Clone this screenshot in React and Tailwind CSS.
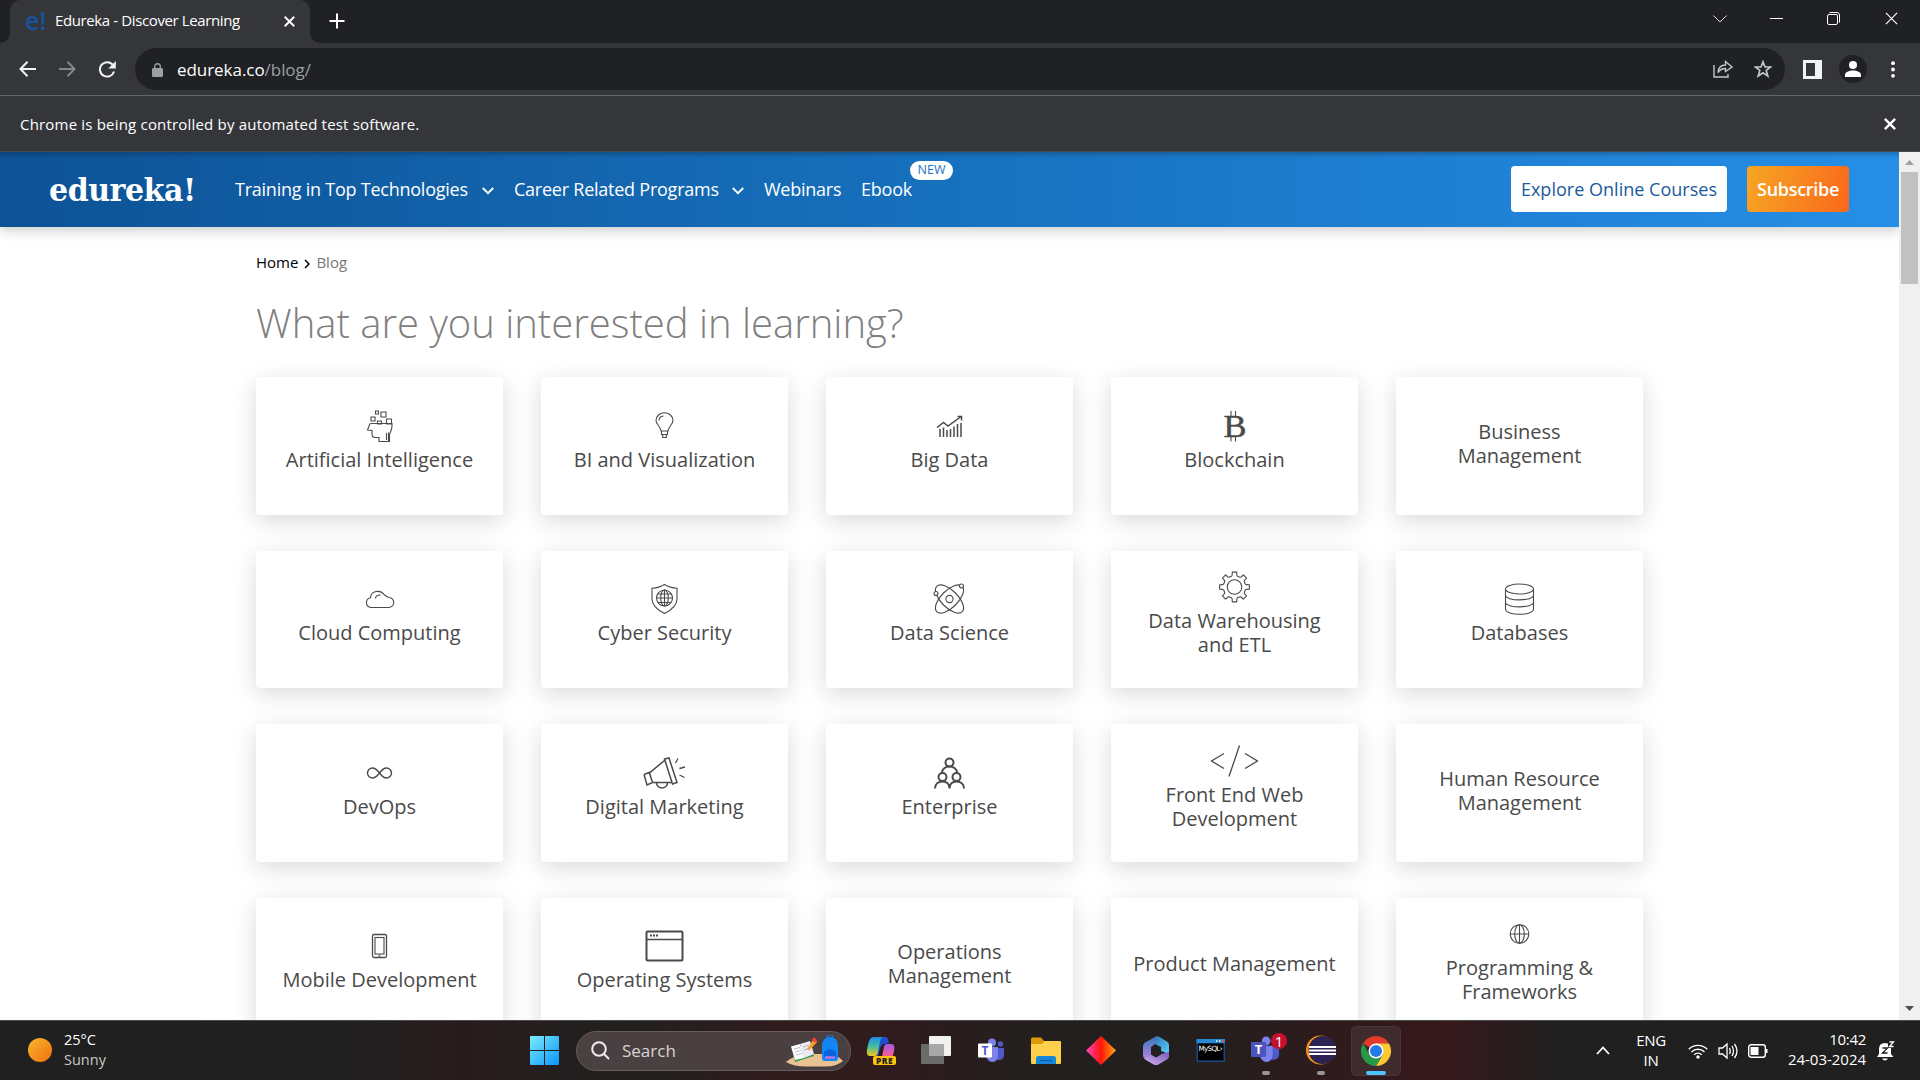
import React from "react";

const gearPath = (() => {
  const pts = [];
  for (let i = 0; i < 8; i++) {
    const c = (i * Math.PI) / 4;
    [[-0.27, 11.2], [-0.2, 12], [-0.15, 15], [0.15, 15], [0.2, 12], [0.27, 11.2]].forEach(([d, r]) => {
      pts.push(`${(r * Math.sin(c + d)).toFixed(2)} ${(-r * Math.cos(c + d)).toFixed(2)}`);
    });
  }
  return `M${pts.join("L")}Z`;
})();

const glyphs = {
  ai: (
    <>
      <path d="M-4-15h3v3h-3zM1.5-14h5v5h-5zM-8.500-9h4v4h-4zM7-7h5v5h-5zM-2-5h4v3h-4z" />
      <path d="M-9-2.500H12.500V0C12.500 4 10.500 6 10 9V15.500H-.5V11.500C-4 11.500-7.500 12-7.500 8.500V4.500L-12 4L-9.500-2.500M7 7V14M9 6.500V15" />
    </>
  ),
  bulb: <path d="M-3.500 5C-4-0-8.500-1.500-8.500-5.500A8.500 7.800 0 0 1 8.500-5.500C8.500-1.500 4-0 3.500 5ZM-3 5V8.500H3V5M-1.800 8.500V11.500H1.800V8.500M-5.500-5.500A5 4.500 0 0 1-1-10" />,
  chart: (
    <>
      <path d="M-12.500 1.500L-6-3.500L-1.500 0L11-9" strokeWidth="1.5" />
      <path d="M8-9.500H12V-5.500" strokeWidth="1.5" />
      <path d="M-9.500 11V3M-6 11V1.500M-2.500 11V4M1 11V3M4.500 11V.5M8 11V-2M11.500 11V-3" strokeWidth="1.500" />
    </>
  ),
  bitcoin: (
    <>
      <text x="-11" y="11" fontSize="31" textLength="23" lengthAdjust="spacingAndGlyphs" fill="#4a4a4a" stroke="#4a4a4a" strokeWidth=".5" fontFamily="Liberation Serif, serif">B</text>
      <path d="M-3.500-15V-9M1-15V-9M-3.500 10V15.500M1 10V15.500" />
    </>
  ),
  cloud: <path d="M-9 8.500A5 5 0 0 1-9-1.300C-8.600-8.500 1-9.500 4.500-4.500C6.500-3 8-2 9.500-1.500A5 5 0 0 1 9 8.500ZM-4-.5C-4-2.500-2-4 1-4" />,
  shield: (
    <>
      <path d="M0-14.500C4-12 8-11 12.500-10.800V0C12.500 6 7 11 0 14.500C-7 11-12.500 6-12.500 0V-10.800C-8-11-4-12 0-14.500Z" />
      <circle cx="0" cy="-1" r="8" />
      <ellipse cx="0" cy="-1" rx="3.800" ry="8" />
      <path d="M-8-1H8M0-9V7M-7-5H7M-7 3.500H7" />
    </>
  ),
  atom: (
    <>
      <ellipse cx="0" cy="0" rx="18" ry="8.500" transform="rotate(45)" />
      <ellipse cx="0" cy="0" rx="18" ry="8.500" transform="rotate(-45)" />
      <circle cx="0" cy="0" r="3.600" />
      <circle cx="-13.500" cy="-5.500" r="2" fill="#fff" />
      <circle cx="12" cy="-13" r="2" fill="#fff" />
    </>
  ),
  gear: (
    <>
      <path d={gearPath} strokeLinejoin="round" />
      <circle cx="0" cy="0" r="7.300" />
    </>
  ),
  database: (
    <>
      <ellipse cx="0" cy="-10" rx="14" ry="5" />
      <path d="M-14-10V10C-14 17 14 17 14 10V-10M-14-4C-14 2.500 14 2.500 14-4M-14 3C-14 9.500 14 9.500 14 3" />
    </>
  ),
  infinity: <path strokeWidth="1.400" d="M0 0C-3-4-4.500-5-7-5A5 5 0 0 0-7 5C-4.500 5-3 4 0 0C3-4 4.500-5 7-5A5 5 0 0 1 7 5C4.500 5 3 4 0 0Z" />,
  megaphone: (
    <>
      <path strokeWidth="1.500" d="M-20.500 1.500L-14-1L0-12.500M-20.500 1.500L-17.500 12L-12 9.500L-15 0M-12 9.500H8M0-14L4.500-15L12.500 9.500L8 11ZM-8 10A5.500 5 0 0 0 3 10" />
      <path strokeWidth="1.300" d="M11-10L13.500-14.500M15-4.500L20.500-6M15 2L20 4.500" />
    </>
  ),
  enterprise: (
    <g strokeWidth="2">
      <circle cx="0" cy="-10.500" r="4" />
      <path d="M-7.500-.5C-7.500-4-4-6.500 0-6.500S7.500-4 7.500-.5" />
      <circle cx="-7" cy="4" r="4" />
      <circle cx="7" cy="4" r="4" />
      <path d="M-14.500 15.500C-14.500 11-11 8.500-7 8.500S0 11 0 15.500C0 11 3 8.500 7 8.500S14.500 11 14.500 15.500" />
    </g>
  ),
  code: <path strokeWidth="1.300" d="M-10.500-7.500L-23 0L-10.500 7.500M10.500-7.500L23 0L10.500 7.500M5-15.500L-5.500 15.500" />,
  mobile: (
    <>
      <rect x="-7" y="-11.500" width="14" height="23" rx="1.500" strokeWidth="1.300" />
      <rect x="-4.500" y="-8.500" width="9" height="16.500" />
      <path d="M-1 9.800H1" strokeWidth="1.200" />
    </>
  ),
  window: (
    <>
      <rect x="-18" y="-14.500" width="36" height="29" rx="1" strokeWidth="2" />
      <path d="M-18-6.500H18" strokeWidth="1.600" />
      <path d="M-14.500-10.500h2M-11.500-10.500h2M-8.500-10.500h2" strokeWidth="2" />
    </>
  ),
  globe: (
    <>
      <circle cx="0" cy="0" r="9.300" />
      <ellipse cx="0" cy="0" rx="4.800" ry="9.300" />
      <path d="M-9.300 0H9.300M0-9.300V9.300" />
    </>
  ),
};

const cards = [
  ["ai", "Artificial Intelligence"],
  ["bulb", "BI and Visualization"],
  ["chart", "Big Data"],
  ["bitcoin", "Blockchain"],
  [null, "Business", "Management"],
  ["cloud", "Cloud Computing"],
  ["shield", "Cyber Security"],
  ["atom", "Data Science"],
  ["gear", "Data Warehousing", "and ETL"],
  ["database", "Databases"],
  ["infinity", "DevOps"],
  ["megaphone", "Digital Marketing"],
  ["enterprise", "Enterprise"],
  ["code", "Front End Web", "Development"],
  [null, "Human Resource", "Management"],
  ["mobile", "Mobile Development"],
  ["window", "Operating Systems"],
  [null, "Operations", "Management"],
  [null, "Product Management"],
  ["globe", "Programming &", "Frameworks"],
];

function Card({ icon, lines }) {
  return (
    <div className={`flex flex-col items-center justify-center rounded-[4px] bg-white shadow-[0_6px_24px_rgba(0,0,0,0.15)] ${icon ? "pb-[3px]" : "pb-[4px]"}`}>
      {icon && (
        <div className="h-[31px]">
          <svg viewBox="-24 -18 48 36" fill="none" stroke="#4a4a4a" strokeWidth="1.1" className="-mt-[9px] h-[36px] w-[48px] -translate-x-[0.5px]">
            {glyphs[icon]}
          </svg>
        </div>
      )}
      {lines.map((l) => (
        <div key={l} className="h-[24px] whitespace-nowrap text-[20px] leading-[24px] text-[#4a4a4a]">{l}</div>
      ))}
    </div>
  );
}

function CloseIcon({ className, strokeWidth = 2 }) {
  return (
    <svg viewBox="0 0 10 10" className={className} stroke="currentColor" strokeWidth={strokeWidth} fill="none">
      <path d="M.7.7l8.600 8.600M9.300.7L.7 9.300" />
    </svg>
  );
}

function BrowserChrome() {
  return (
    <div className="h-[152px] bg-[#35363a] text-white">
      <div className="flex h-[43px] bg-[#202124]">
        <div className="flex w-[10px] items-end bg-[#35363a]">
          <div className="h-[43px] w-[10px] rounded-br-[10px] bg-[#202124]" />
        </div>
        <div className="flex w-[300px] items-center rounded-t-[10px] bg-[#35363a] pl-[15px]">
          <span className="w-[20px] pb-[4px] text-[25px] font-semibold leading-[30px] text-[#15539e]">e!</span>
          <span className="ml-[10px] w-[205px] whitespace-nowrap pb-[3px] text-[15px] leading-[20px] tracking-[-0.38px]">Edureka - Discover Learning</span>
          <CloseIcon className="ml-[24px] size-[11px]" strokeWidth={1.700} />
        </div>
        <div className="bg-[#35363a]">
          <div className="h-[43px] w-[10px] rounded-bl-[10px] bg-[#202124]" />
        </div>
        <svg viewBox="0 0 16 16" className="ml-[9px] mt-[13px] size-[16px]" stroke="#fff" strokeWidth="2"><path d="M8 .5v15M.5 8h15" /></svg>
        <div className="ml-auto flex items-center pb-[6px] pr-[22px]">
          <svg viewBox="0 0 14 8" className="h-[8px] w-[14px]" stroke="#ddd" fill="none"><path d="M.5.5L7 7L13.500.5" /></svg>
          <div className="ml-[43px] h-px w-[13px] bg-white" />
          <svg viewBox="0 0 13 13" className="ml-[44px] size-[13px]" stroke="#fff" fill="none"><rect x=".5" y="2.500" width="10" height="10" rx="1.500" /><path d="M2.500.5H10A2.500 2.500 0 0 1 12.500 3V10.500" /></svg>
          <CloseIcon className="ml-[45px] size-[13px]" strokeWidth={0.9} />
        </div>
      </div>
      <div className="flex h-[52px] items-center pl-[19px]">
        <svg viewBox="0 0 17 16" className="h-[16px] w-[17px]" stroke="#f1f3f4" strokeWidth="2" fill="none"><path d="M8.500.8L1.500 8l7 7.200M1.500 8H17" /></svg>
        <svg viewBox="0 0 17 16" className="ml-[23px] h-[16px] w-[17px]" stroke="#85868a" strokeWidth="2" fill="none"><path d="M8.500.8l7 7.200l-7 7.200M15.500 8H0" /></svg>
        <svg viewBox="0 0 18 17" className="ml-[22px] h-[17px] w-[18px]" fill="none" stroke="#f1f3f4" strokeWidth="2"><path d="M15 4.200A7.200 7.200 0 1 0 16 10.500" /><path d="M17.800 0V7.500H10.300Z" fill="#f1f3f4" stroke="none" /></svg>
        <div className="ml-[19px] flex h-[42px] w-[1650px] items-center rounded-full bg-[#202124] pl-[17px] pr-[13px]">
          <svg viewBox="0 0 11 14" className="mt-px h-[14px] w-[11px]" fill="#9aa0a6"><rect y="5" width="11" height="9" rx="1.200" /><path d="M2.700 5.500V3.500a2.800 2.800 0 0 1 5.600 0V5.500" fill="none" stroke="#9aa0a6" strokeWidth="1.400" /></svg>
          <span className="ml-[14px] pt-[2px] text-[17px] leading-[22px] tracking-[-0.05px]">edureka.co<span className="text-[#9aa0a6]">/blog/</span></span>
          <svg viewBox="0 0 20 18" className="ml-auto h-[18px] w-[20px]" fill="none" stroke="#c4c7c9" strokeWidth="1.400"><path d="M1 5V17H15V14M5 12.500C5.500 7 8.500 5 12.500 5V1.500L19 7L12.500 11.500V8.500C9.500 8.500 7 9.500 5 12.500Z" /></svg>
          <svg viewBox="0 0 18 18" className="ml-[21px] size-[18px]" fill="none" stroke="#c4c7c9" strokeWidth="1.700"><path d="M9 1.800L11 7H16.700L12.200 10.400L13.800 16L9 12.700L4.200 16L5.800 10.400L1.300 7H7Z" /></svg>
        </div>
        <svg viewBox="0 0 19 19" className="ml-[18px] size-[19px]"><path d="M0 0H19V19H0ZM3 3V16H12V3Z" fill="#f1f3f4" fillRule="evenodd" /></svg>
        <svg viewBox="0 0 28 28" className="ml-[17px] size-[28px]"><circle cx="14" cy="14" r="14" fill="#202124" /><circle cx="14" cy="10" r="4" fill="#fff" /><path d="M6 22V20C6 17 10 15.500 14 15.500S22 17 22 20V22Z" fill="#fff" /></svg>
        <svg viewBox="0 0 4 17" className="ml-[24px] h-[17px] w-[4px]" fill="#fff"><circle cx="2" cy="2.200" r="1.900" /><circle cx="2" cy="8.500" r="1.900" /><circle cx="2" cy="14.800" r="1.900" /></svg>
      </div>
      <div className="flex h-[57px] items-center border-y border-t-[#64656a] border-b-[#4a4b4e] pl-[20px] pr-[24px] text-[15px]">
        <span className="pt-px tracking-[0.19px]">Chrome is being controlled by automated test software.</span>
        <CloseIcon className="ml-auto size-[12px]" strokeWidth={2} />
      </div>
    </div>
  );
}

function NavChevron({ className }) {
  return <svg viewBox="0 0 12 8" className={className} stroke="#fff" strokeWidth="1.900" fill="none"><path d="M.8 1L6 6.200L11.200 1" /></svg>;
}

function SiteHeader() {
  return (
    <div className="relative z-10 flex h-[75px] items-center bg-[linear-gradient(90deg,#0d5295_0%,#1771be_50%,#268ee6_100%)] pl-[49px] text-[18px] font-medium text-white shadow-[0_3px_12px_rgba(0,0,0,0.22)]">
      <div className="pointer-events-none absolute inset-x-0 top-0 h-[6px] bg-gradient-to-b from-black/20 to-transparent" />
      <div className="w-[186px]">
        <span className="inline-block origin-left scale-x-[0.97] font-['DejaVu_Serif'] text-[31px] font-bold leading-[40px] tracking-[-0.5px]">edureka!</span>
      </div>
      <span className="w-[233px] whitespace-nowrap tracking-[-0.24px]">Training in Top Technologies</span>
      <NavChevron className="ml-[14px] mt-[2px] h-[8px] w-[12px]" />
      <span className="ml-[20px] w-[204px] whitespace-nowrap tracking-[-0.24px]">Career Related Programs</span>
      <NavChevron className="ml-[14px] mt-[2px] h-[8px] w-[12px]" />
      <span className="ml-[20px] w-[77px] whitespace-nowrap tracking-[-0.25px]">Webinars</span>
      <span className="relative ml-[20px] whitespace-nowrap tracking-[-0.2px]">
        Ebook
        <span className="absolute -top-[15px] left-[49px] flex h-[19px] w-[43px] items-center justify-center rounded-full bg-white pb-px text-[12.5px] tracking-normal text-[#1c74c4]">NEW</span>
      </span>
      <div className="-mt-[2px] ml-auto flex gap-[20px] pr-[50px]">
        <div className="flex h-[46px] w-[216px] items-center justify-center whitespace-nowrap rounded-[4px] bg-white pt-px tracking-[0.02px] text-[#1a5a9e]">Explore Online Courses</div>
        <div className="flex h-[46px] w-[102px] items-center justify-center rounded-[4px] bg-[linear-gradient(105deg,#f7a623,#f9681c)] pt-px font-semibold tracking-[-0.3px]">Subscribe</div>
      </div>
    </div>
  );
}

function Teams({ white }) {
  return (
    <>
      <circle cx="14" cy="4.500" r="4" fill="#7b83eb" />
      <circle cx="22.500" cy="6" r="2.700" fill="#5059c9" />
      <path d="M18 10H26V17C26 20 24 22 21 22H18Z" fill="#5059c9" />
      <path d="M8 9H20V17C20 21 18 24 14.500 24S9 21 8 18Z" fill="#7b83eb" />
      <rect x="0" y="5.500" width="14" height="14" rx="1" fill={white ? "#fff" : "#4b53bc"} />
      <text x="7" y="16.500" textAnchor="middle" fontSize="12" fontWeight="700" fill={white ? "#5059c9" : "#fff"}>T</text>
    </>
  );
}

const apps = [
  {
    name: "copilot",
    art: (
      <>
        <defs>
          <linearGradient id="cpA" x1="0" y1="0" x2="0" y2="1"><stop offset="0" stopColor="#1c8be8" /><stop offset=".5" stopColor="#45bfa0" /><stop offset="1" stopColor="#f4c51c" /></linearGradient>
          <linearGradient id="cpB" x1="0" y1="0" x2="0" y2="1"><stop offset="0" stopColor="#a95bea" /><stop offset=".6" stopColor="#ee5c9a" /><stop offset="1" stopColor="#f87c50" /></linearGradient>
        </defs>
        <path d="M12 1H19C21.500 1 22 3 23 7L18 8C16 8 15 10 14 13L12 20H8Z" fill="#1f4fd0" />
        <path d="M17 1H8C4 1 3 5 2 9C1 13-1 20 4 20H9C12 20 12 15 13 11C14 7 14 2 17 1Z" fill="url(#cpA)" />
        <path d="M21 8H25C30 8 28.500 14 27 19C26 24 24 26 20 26H12C16 25 16 20 17 16C18 11 18 8 21 8Z" fill="url(#cpB)" />
        <rect x="7" y="20" width="23" height="9" rx="2" fill="#fdc30b" />
        <text x="18.500" y="27.500" textAnchor="middle" fontSize="8.500" fontWeight="800" letterSpacing=".4" fill="#222">PRE</text>
      </>
    ),
  },
  {
    name: "taskview",
    art: (
      <>
        <rect x="8" y="0" width="22" height="20" rx="1" fill="#f1f1f1" />
        <rect x="0" y="8" width="23" height="20" rx="1" fill="#6b6b6b" />
        <path d="M8 8H23V20H8Z" fill="#a8a6a6" />
      </>
    ),
  },
  { name: "teams", art: <g transform="translate(2 2)"><Teams white /></g> },
  {
    name: "explorer",
    art: (
      <>
        <path d="M0 3Q0 1.500 1.500 1.500H10L13 5H28V12H0Z" fill="#dd9a07" />
        <path d="M0 8H11L13.500 5H29Q30 5 30 6V27Q30 28 29 28H1Q0 28 0 27Z" fill="#fcd04a" />
        <path d="M5 28V22.500Q5 20 7.500 20H22.500Q25 20 25 22.500V28Z" fill="#1587d8" />
        <path d="M9 24.500H21" stroke="#0a5ba4" strokeWidth="1.200" />
      </>
    ),
  },
  {
    name: "diamond",
    art: (
      <>
        <defs><linearGradient id="dm"><stop offset="0" stopColor="#ff45c8" /><stop offset=".5" stopColor="#ff1508" /><stop offset="1" stopColor="#ffab10" /></linearGradient></defs>
        <path d="M15 0L30 14.500L15 29L0 14.500Z" fill="url(#dm)" />
      </>
    ),
  },
  {
    name: "m365",
    art: (
      <>
        <defs>
          <linearGradient id="mA" x1="0" y1="0" x2="0" y2="1"><stop offset="0" stopColor="#3a78b8" /><stop offset="1" stopColor="#a884e0" /></linearGradient>
          <linearGradient id="mB" x1="0" y1="0" x2="1" y2="1"><stop offset="0" stopColor="#2f6fb4" /><stop offset="1" stopColor="#5cd0fa" /></linearGradient>
          <linearGradient id="mC" x1="0" y1="1" x2="1" y2="0"><stop offset="0" stopColor="#d6b4f2" /><stop offset="1" stopColor="#7a58b8" /></linearGradient>
        </defs>
        <path d="M15 .5Q17 0 18.500 1L26 5.500Q28 6.800 28 9V18L20 15V11L13 7.500L11 4Z" fill="url(#mB)" />
        <path d="M15 .5L4 6.500Q2 8 2 10V20Q2 22 4 22L10 19V11L14 8Z" fill="url(#mA)" />
        <path d="M28 16V20.500Q28 22 26 23.500L17 28.700Q15 29.500 13 28.700L4 23.500L3 22L10 18.500L15 21L20 18Z" fill="url(#mC)" />
        <path d="M10 11L20 11L20 18.500L15 21.500L10 18.500Z" fill="#242021" />
      </>
    ),
  },
  {
    name: "mysql",
    art: (
      <>
        <rect x=".5" y="3" width="28.500" height="23" rx="1" fill="#174a84" />
        <rect x=".5" y="3" width="28.500" height="4" fill="#2589d4" />
        <path d="M20 5h1.500M23 5h1.500" stroke="#fff" strokeWidth="1.500" />
        <path d="M26 5h2" stroke="#f05030" strokeWidth="2" />
        <rect x="2" y="7.500" width="25.500" height="17" fill="#000" />
        <text x="2.500" y="14.800" fontSize="7.200" fill="#fff" textLength="24" fontFamily="DejaVu Sans">MySQL›</text>
      </>
    ),
  },
  {
    name: "teams-work",
    running: true,
    art: (
      <>
        <g transform="scale(1.08)"><Teams /></g>
        <circle cx="28" cy="5" r="8" fill="#c8102e" />
        <text x="28" y="10.500" textAnchor="middle" fontSize="15" fill="#fff">1</text>
      </>
    ),
  },
  {
    name: "eclipse",
    running: true,
    art: (
      <>
        <circle cx="14.500" cy="14" r="14.500" fill="#f7941e" />
        <circle cx="16.500" cy="14" r="14" fill="#33292c" />
        <circle cx="16.500" cy="14" r="13.500" fill="#2c2255" />
        <path d="M3 11H30M3 14.500H30M3 18H30" stroke="#fff" strokeWidth="2" />
      </>
    ),
  },
  {
    name: "chrome",
    active: true,
    art: (
      <>
        <path d="M15 15L2 7.500A15 15 0 0 1 28 7.500L21.500 7.500Z" fill="#e33b2e" />
        <path d="M15 7.500H28A15 15 0 0 1 15 30L21.500 18.700Z" fill="#fcc934" />
        <path d="M8.500 18.700L2 7.500A15 15 0 0 0 15 30L21.500 18.700Z" fill="#269a48" />
        <circle cx="15" cy="15" r="7.500" fill="#fff" />
        <circle cx="15" cy="15" r="6" fill="#2578e8" />
      </>
    ),
  },
];

function Taskbar() {
  return (
    <div className="flex h-[60px] items-center border-t border-[#4b4b4b] bg-[linear-gradient(90deg,#202020_0%,#222020_19%,#291b1d_24%,#231f1f_30%,#24201f_34%,#301b1d_40%,#301b1d_46%,#251f1f_53%,#221f1f_60%,#281d1d_65%,#33191c_72%,#35191d_76%,#202020_81%,#202020_100%)] text-[14px] text-white">
      <div className="mb-[2px] ml-[28px] size-[24px] rounded-full bg-[linear-gradient(135deg,#f8b62c,#f0700f)]" />
      <div className="-mt-[2px] ml-[12px] w-[466px] text-[14.5px] leading-[20px]">
        <div>25°C</div>
        <div className="text-[#c8c8c8]">Sunny</div>
      </div>
      <svg viewBox="0 0 29 29" className="size-[29px]">
        <defs><linearGradient id="win" x1="0" y1="0" x2="1" y2="1"><stop offset="0" stopColor="#7cecff" /><stop offset="1" stopColor="#0a95f8" /></linearGradient></defs>
        <path d="M0 1Q0 0 1 0H14V14H0ZM15 0H28Q29 0 29 1V14H15ZM0 15H14V29H1Q0 29 0 28ZM15 15H29V28Q29 29 28 29H15Z" fill="url(#win)" />
      </svg>
      <div className="ml-[17px] flex h-[40px] w-[275px] items-center rounded-full border border-[#655c5c] bg-[#4a4041] pl-[14px] pr-[7px]">
        <svg viewBox="0 0 19 19" className="size-[19px]" fill="none" stroke="#eee" strokeWidth="2"><circle cx="8" cy="8" r="6.800" /><path d="M13 13l5 5" /></svg>
        <span className="ml-[12px] text-[17px] text-[#d8d4d4]">Search</span>
        <svg viewBox="0 0 57 32" className="ml-auto h-[32px] w-[57px]">
          <path d="M0 27Q10 19 20 19H45Q50 19 57 26Q50 32 38 31.500H20Q8 31.500 0 27Z" fill="#e9c294" />
          <path d="M6 13L25 8L28 21L9 27Z" fill="#3c9c50" />
          <path d="M5 11.500L14 9L18 23L9 25Z" fill="#fff" />
          <path d="M14 9L24 6L28 19L18 23Z" fill="#eceaf6" />
          <path d="M8 14l6-1.500M9 17l6-1.500M10 20l6-1.500M17 12l6-2M18 15l6-2" stroke="#a9a5c0" strokeWidth=".8" />
          <path d="M22 14L28 5L30 7L23 14.500Z" fill="#f9a02c" stroke="#f9a02c" strokeWidth="1.500" />
          <path d="M27 3.500l3 3" stroke="#ee4433" strokeWidth="3.500" />
          <rect x="41" y="0" width="6" height="6" rx="3" fill="none" stroke="#1b6fd0" strokeWidth="1.500" />
          <path d="M36 12Q36 2 44 2T52 12V23Q52 26 49 26H39Q36 26 36 23Z" fill="#1287f3" />
          <path d="M38 17Q44 11 50 17V22Q50 24 48 24H40Q38 24 38 22Z" fill="#0c62dc" />
          <path d="M39 22.500H49" stroke="#b679f0" strokeWidth="2.500" />
        </svg>
      </div>
      <div className="ml-[2px] flex">
        {apps.map((a) => (
          <div key={a.name} className="flex w-[55px] justify-center">
            <div className={a.active ? "relative flex h-[50px] w-[50px] justify-center rounded-[5px] border border-[#4a3638] bg-[#3f2b2e] pt-[9px]" : "relative flex h-[50px] w-[50px] justify-center pt-[10px]"}>
              <svg viewBox="0 0 30 30" className="size-[30px] overflow-visible font-['Open_Sans']">{a.art}</svg>
              {a.running && <div className="absolute bottom-[1px] left-[21px] h-[4px] w-[8px] rounded-full bg-[#9c9595]" />}
              {a.active && <div className="absolute bottom-0 left-[14px] h-[4px] w-[20px] rounded-full bg-[#4cc2ff]" />}
            </div>
          </div>
        ))}
      </div>
      <svg viewBox="0 0 14 9" className="ml-auto h-[9px] w-[14px]" fill="none" stroke="#fff" strokeWidth="1.800"><path d="M1 8L7 1.500L13 8" /></svg>
      <div className="-mt-[2px] ml-[25px] w-[32px] text-center text-[15px] leading-[20px] tracking-[-0.3px]"><div>ENG</div><div>IN</div></div>
      <svg viewBox="0 0 20 16" className="ml-[21px] h-[16px] w-[20px]" fill="none" stroke="#fff" strokeWidth="1.400"><path d="M.8 6.200A13 13 0 0 1 19.200 6.200M3.500 9A9.200 9.200 0 0 1 16.500 9M6.200 11.700A5.400 5.400 0 0 1 13.800 11.700" /><circle cx="10" cy="14" r="1.700" fill="#fff" stroke="none" /></svg>
      <svg viewBox="0 0 21 18" className="ml-[10px] h-[18px] w-[21px]" fill="none" stroke="#fff" strokeWidth="1.300"><path d="M1 6H4.500L9 2V16L4.500 12H1ZM11.500 6Q13 9 11.500 12M14 4Q17 9 14 14M16.500 2Q21.500 9 16.500 16" /></svg>
      <svg viewBox="0 0 20 14" className="ml-[9px] h-[14px] w-[20px]"><rect x=".7" y=".7" width="16.600" height="12.600" rx="2.500" fill="none" stroke="#fff" strokeWidth="1.400" /><rect x="2.500" y="3" width="8" height="8" fill="#fff" /><path d="M18 5h1.500v4H18z" fill="#fff" /></svg>
      <div className="-mt-[3px] ml-[15px] flex w-[83px] flex-col items-end whitespace-nowrap text-[15px] leading-[20px]"><div className="tracking-[-0.3px]">10:42</div><div className="tracking-[-0.02px]">24-03-2024</div></div>
      <svg viewBox="0 0 18 20" className="ml-[11px] mr-[25px] h-[20px] w-[18px]"><path d="M2 8Q2 2 8 2Q14 2 14 8V13L16.500 16H0L2 13Z" fill="#fff" /><path d="M5 17.500H11Q10 19.500 8 19.500T5 17.500Z" fill="#fff" /><path d="M11 0H18V7H11Z" fill="#202020" /><path d="M5.500 7H10.500L5.500 12H10.500M12.500 1H16.500L12.500 5.500H16.500" fill="none" stroke="#202020" strokeWidth="1.300" /><path d="M12.500 1H16.500L12.500 5.500H16.500" fill="none" stroke="#fff" strokeWidth="1.300" /></svg>
    </div>
  );
}

export default function App() {
  return (
    <div className="flex h-[1080px] w-[1920px] flex-col overflow-hidden bg-white font-['Open_Sans',sans-serif]">
      <BrowserChrome />
      <div className="flex h-[868px]">
        <div className="w-[1899px] overflow-hidden bg-white">
          <SiteHeader />
          <div className="px-[256px]">
            <div className="flex h-[71px] items-center text-[15px]">
              <span className="text-black">Home</span>
              <svg viewBox="0 0 6 10" className="ml-[6px] mt-[3px] h-[10px] w-[6px]" stroke="#000" strokeWidth="1.500" fill="none"><path d="M1 1l4 4l-4 4" /></svg>
              <span className="ml-[6px] text-[#777]">Blog</span>
            </div>
            <h1 className="h-[79px] whitespace-nowrap text-[40px] font-light leading-[50px] text-[#808080]">What are you interested in learning?</h1>
            <div className="grid auto-rows-[137.5px] grid-cols-[repeat(5,247px)] gap-x-[38px] gap-y-[36px]">
              {cards.map(([icon, ...lines]) => (
                <Card key={lines.join(" ")} icon={icon} lines={lines} />
              ))}
            </div>
          </div>
        </div>
        <div className="flex w-[21px] flex-col items-center bg-[#f0f0f0] pt-[8px]">
          <div className="h-[5px] w-[9px] bg-[#a0a0a0] [clip-path:polygon(50%_0,100%_100%,0_100%)]" />
          <div className="mt-[7px] h-[112px] w-[17px] bg-[#c1c1c1]" />
          <div className="mb-[9px] mt-auto h-[5px] w-[9px] bg-[#505050] [clip-path:polygon(0_0,100%_0,50%_100%)]" />
        </div>
      </div>
      <Taskbar />
    </div>
  );
}
